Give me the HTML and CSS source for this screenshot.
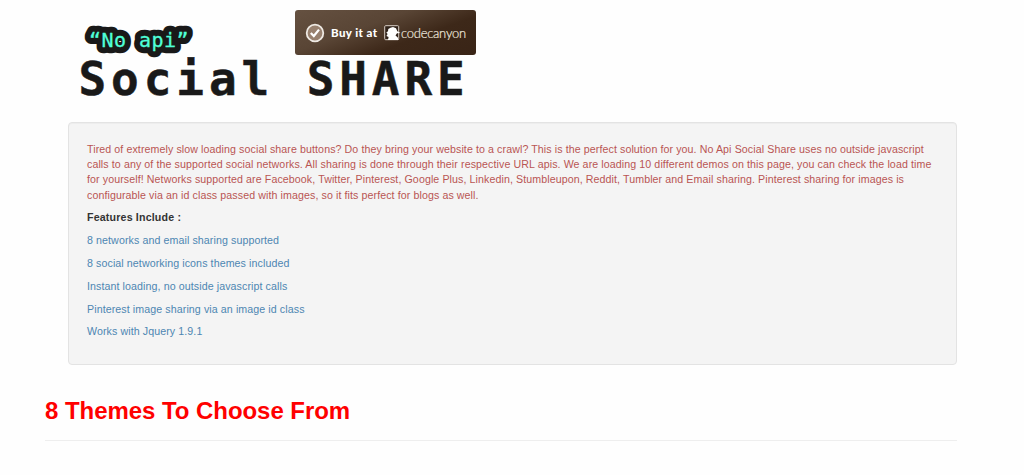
FILE: index.html
```html
<!DOCTYPE html>
<html lang="en">
<head>
<meta charset="utf-8">
<title>No Api Social Share</title>
<link rel="stylesheet" href="styles.css">
</head>
<body>
<header class="masthead">
  <div class="brand">
    <svg class="tagline" width="130" height="44" viewBox="0 0 130 44">
      <use class="halo" href="#tag"/>
      <g class="face"><text id="tag" x="11" y="30.6" textLength="99.5">“No api”</text></g>
    </svg>
    <h1 class="wordmark">Social SHARE</h1>
  </div>
  <a class="buy">
    <svg class="check" width="20" height="20" viewBox="0 0 20 20">
      <circle cx="10" cy="10" r="8.3" fill="#98816f" stroke="#eee9e3" stroke-width="1.8"/>
      <path d="M5.8 10 8.8 13 14 6.6" fill="none" stroke="#fff" stroke-width="2.2"/>
    </svg>
    <span class="buy-label">Buy it at</span>
    <svg class="bird" width="17" height="16" viewBox="0 0 17 16">
      <rect x=".7" y=".7" width="14" height="14" rx="1" fill="#30231a" stroke="#d8cec5"/>
      <path d="M4 15 4.6 12 2.4 11 3.6 9 2.3 7.5 4 6.2 4.3 4 6.5 2.8 9 2 12 3.3 13.3 6.2 16.5 8 13 8.3 11.5 10.5 13.8 12.5 14.5 15Z" fill="#fff"/>
    </svg>
    <span class="buy-name">codecanyon</span>
  </a>
</header>
<main>
  <section class="well">
    <p class="intro">Tired of extremely slow loading social share buttons? Do they bring your website to a crawl? This is the perfect solution for you. No Api Social Share uses no outside javascript<br>calls to any of the supported social networks. All sharing is done through their respective URL apis. We are loading 10 different demos on this page, you can check the load time<br>for yourself! Networks supported are Facebook, Twitter, Pinterest, Google Plus, Linkedin, Stumbleupon, Reddit, Tumbler and Email sharing. Pinterest sharing for images is<br>configurable via an id class passed with images, so it fits perfect for blogs as well.</p>
    <p class="label">Features Include :</p>
    <p class="feature">8 networks and email sharing supported</p>
    <p class="feature">8 social networking icons themes included</p>
    <p class="feature">Instant loading, no outside javascript calls</p>
    <p class="feature">Pinterest image sharing via an image id class</p>
    <p class="feature">Works with Jquery 1.9.1</p>
  </section>
  <h2 class="themes">8 Themes To Choose From</h2>
</main>
</body>
</html>
```
FILE: styles.css
```css
* { box-sizing: border-box; }
body { margin: 0; background: #fefefe; color: #333; font: 10.65px/15.2px "Liberation Sans", Arial, sans-serif; overflow: hidden; }
.masthead { height: 122px; padding: 10px 0 0 78px; display: grid; grid-template-columns: 217px 181px; }
.brand { padding-top: 6px; white-space: nowrap; }
.tagline { display: block; font: 20px "DejaVu Sans Mono", monospace; stroke-linejoin: round; }
.halo { fill: #191919; stroke: #191919; stroke-width: 12.5px; }
.face { fill: #4fffd8; stroke: #4fffd8; stroke-width: .3px; }
.wordmark { margin: -8px 0 0; padding-left: .5px; color: #191919; font: bold 46px/54px "DejaVu Sans Mono", monospace; letter-spacing: 4.9px; -webkit-text-stroke: .5px #191919; }
.buy { height: 45px; display: flex; align-items: center; padding-left: 10px; border-radius: 3px; color: #fff; white-space: nowrap; background: linear-gradient(160deg, #655141 0%, #594535 38%, #3d2819 65%, #392416 100%); }
.buy-label { margin: 0 0 0 6px; width: 48px; font: 900 11.5px/16px Lato, sans-serif; letter-spacing: .4px; }
.bird { margin-left: 5px; }
.buy-name { margin-left: 0; color: #eee7df; font: 300 13px/16px Lato, sans-serif; letter-spacing: -.25px; -webkit-text-stroke: .2px #eee7df; }
.well { margin: 0 67px 0 68px; height: 243px; padding: 19px 18px; border: 1px solid #e3e3e3; border-radius: 4px; background: #f4f4f4; box-shadow: inset 0 1px 1px rgba(0, 0, 0, .03); letter-spacing: .09px; }
.well p { margin: 0 0 7.6px; white-space: nowrap; }
.intro { color: #b95553; }
.label { font-weight: bold; letter-spacing: .17px; }
.feature { color: #4d86b2; }
.themes { margin: 31px 67px 0 45px; height: 45px; border-bottom: 1px solid #eee; color: #f00; font: bold 24px/30px "Liberation Sans", Arial, sans-serif; letter-spacing: -.05px; }
```
